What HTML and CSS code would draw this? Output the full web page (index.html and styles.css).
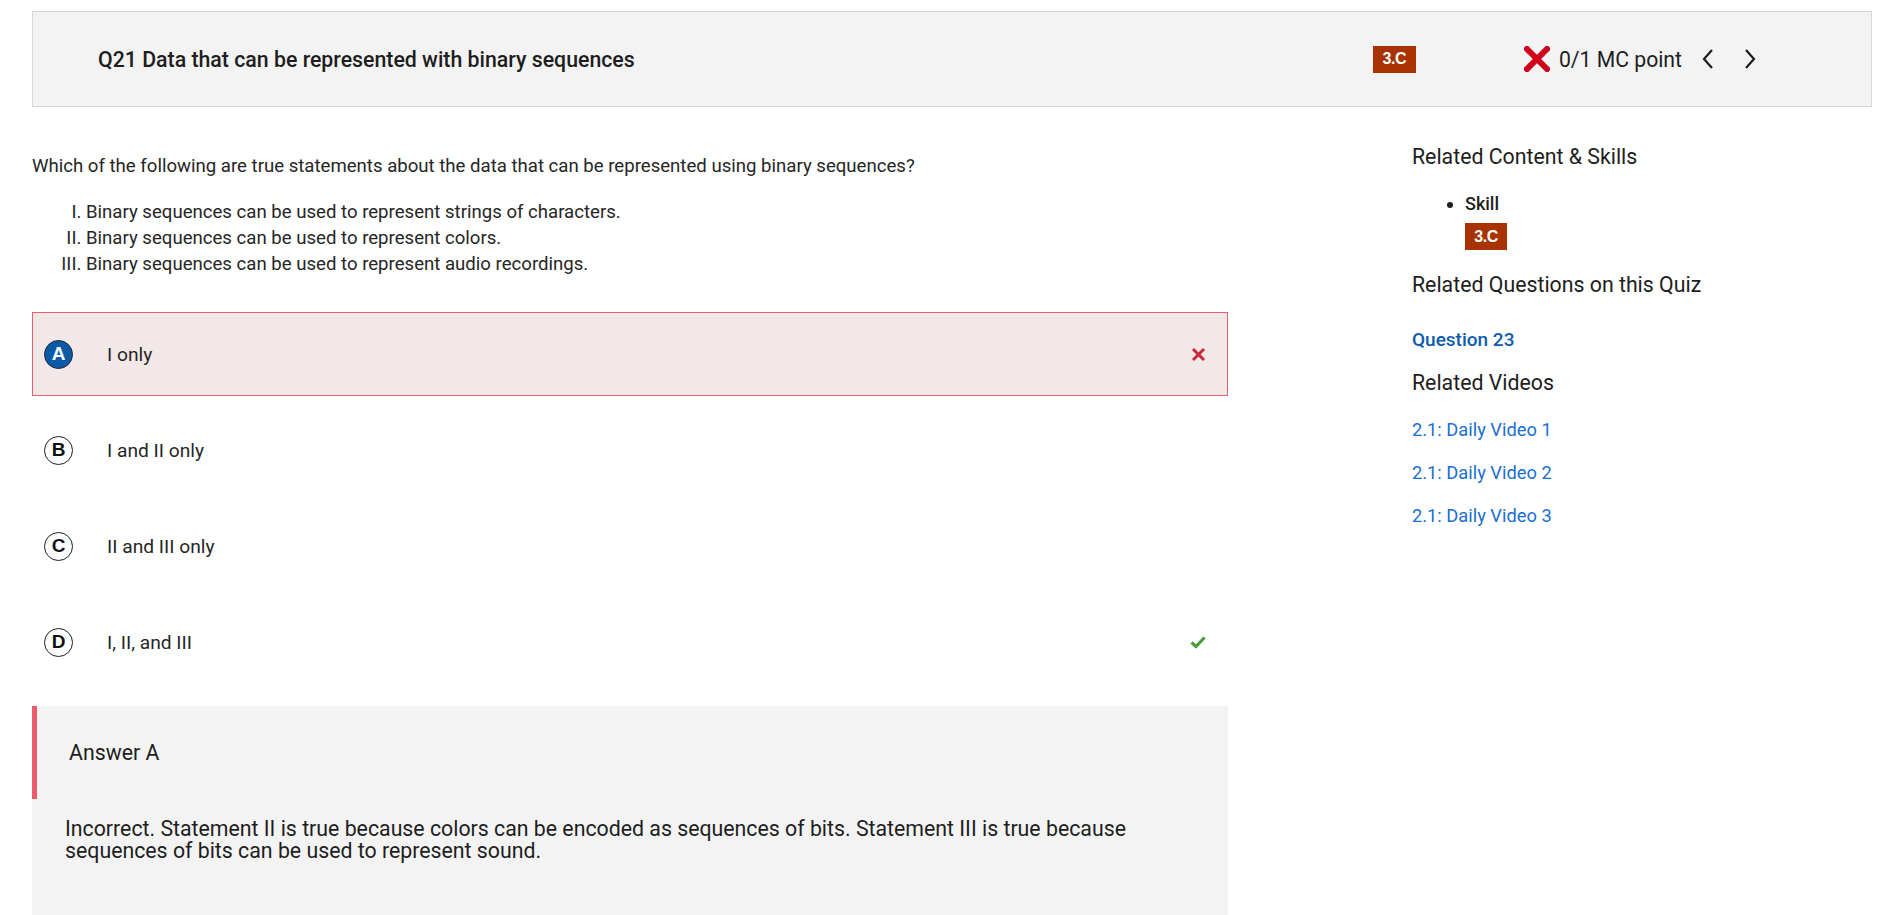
FILE: index.html
```html
<!DOCTYPE html>
<html lang="en">
<head>
<meta charset="utf-8">
<title>Q21 Data that can be represented with binary sequences</title>
<link rel="stylesheet" href="styles.css">
</head>
<body>
<div class="page">
  <header class="qhead">
    <h1 class="qtitle">Q21 Data that can be represented with binary sequences</h1>
    <span class="badge">3.C</span>
    <div class="score">
      <svg class="score-x" viewBox="0 0 26 26" width="26" height="26"><path d="M3 3 L23 23 M23 3 L3 23" stroke="#d0021b" stroke-width="6" stroke-linecap="square"/></svg>
      <span class="score-text">0/1 MC point</span>
      <button class="nav" aria-label="Previous"><svg viewBox="0 0 14 22" width="14" height="22"><path d="M11 2 L3 11 L11 20" fill="none" stroke="#1e1e1e" stroke-width="2.2"/></svg></button>
      <button class="nav" aria-label="Next"><svg viewBox="0 0 14 22" width="14" height="22"><path d="M3 2 L11 11 L3 20" fill="none" stroke="#1e1e1e" stroke-width="2.2"/></svg></button>
    </div>
  </header>

  <div class="layout">
    <main class="main">
      <p class="question">Which of the following are true statements about the data that can be represented using binary sequences?</p>
      <ol class="statements">
        <li>Binary sequences can be used to represent strings of characters.</li>
        <li>Binary sequences can be used to represent colors.</li>
        <li>Binary sequences can be used to represent audio recordings.</li>
      </ol>

      <div class="options">
        <div class="option option--wrong">
          <span class="letter letter--selected">A</span>
          <span class="opt-text">I only</span>
          <svg class="mark" viewBox="0 0 15 15" width="15" height="15"><path d="M2 2 L13 13 M13 2 L2 13" stroke="#c9283c" stroke-width="3"/></svg>
        </div>
        <div class="option">
          <span class="letter">B</span>
          <span class="opt-text">I and II only</span>
        </div>
        <div class="option">
          <span class="letter">C</span>
          <span class="opt-text">II and III only</span>
        </div>
        <div class="option">
          <span class="letter">D</span>
          <span class="opt-text">I, II, and III</span>
          <svg class="mark" viewBox="0 0 16 14" width="16" height="14"><path d="M1.5 7.5 L6 11.5 L14.5 2.5" fill="none" stroke="#4a9e3a" stroke-width="3.2"/></svg>
        </div>
      </div>

      <section class="answer">
        <div class="answer-head">Answer A</div>
        <p class="answer-body">Incorrect. Statement II is true because colors can be encoded as sequences of bits. Statement III is true because sequences of bits can be used to represent sound.</p>
      </section>
    </main>

    <aside class="side">
      <h2 class="side-h">Related Content &amp; Skills</h2>
      <ul class="skills">
        <li>
          <span class="skill-name">Skill</span>
          <span class="badge badge--side">3.C</span>
        </li>
      </ul>
      <h2 class="side-h side-h--q">Related Questions on this Quiz</h2>
      <a class="q-link" href="#">Question 23</a>
      <h2 class="side-h side-h--v">Related Videos</h2>
      <ul class="videos">
        <li><a href="#">2.1: Daily Video 1</a></li>
        <li><a href="#">2.1: Daily Video 2</a></li>
        <li><a href="#">2.1: Daily Video 3</a></li>
      </ul>
    </aside>
  </div>
</div>
</body>
</html>
```

FILE: styles.css
```css
* { box-sizing: border-box; }

html, body {
  margin: 0;
  padding: 0;
  background: #fff;
}

body {
  font-family: Roboto, "Liberation Sans", Arial, sans-serif;
  color: #1e1e1e;
  overflow: hidden;
}

.page {
  padding: 11px 8px 0 32px;
}

/* Header */
.qhead {
  display: flex;
  align-items: center;
  height: 96px;
  background: #f3f3f3;
  border: 1px solid #d6d6d6;
  padding: 0 114px 0 65px;
}

.qtitle {
  flex: 1;
  margin: 0;
  font-size: 21.3px;
  font-weight: 500;
  color: #1e1e1e;
}

.badge {
  display: inline-flex;
  align-items: center;
  justify-content: center;
  width: 43px;
  height: 27px;
  background: #a83200;
  color: #fff;
  font-family: "Liberation Sans", Arial, sans-serif;
  font-weight: 700;
  font-size: 16px;
  letter-spacing: -0.4px;
}

.score {
  display: flex;
  align-items: center;
  margin-left: 108px;
}

.score-x {
  display: block;
  margin-right: 9px;
}

.score-text {
  font-size: 21.2px;
  color: #1e1e1e;
}

.nav {
  border: 0;
  background: none;
  padding: 0;
  margin-left: 19px;
  width: 14px;
  height: 22px;
  display: flex;
}

.nav + .nav {
  margin-left: 28px;
}

/* Layout */
.layout {
  display: grid;
  grid-template-columns: 65% 25%;
  column-gap: 10%;
  margin-top: 36px;
}

.question {
  margin: 11px 0 0;
  font-size: 18.6px;
  line-height: 24px;
  color: #262626;
}

.statements {
  list-style: upper-roman;
  margin: 21px 0 0;
  padding-left: 54px;
  font-size: 18.6px;
  line-height: 26px;
  color: #262626;
}

.options {
  display: flex;
  flex-direction: column;
  gap: 12px;
  margin-top: 35px;
}

.option {
  display: flex;
  align-items: center;
  height: 84px;
  padding: 0 21px 0 11px;
  border: 1px solid transparent;
}

.option--wrong {
  background: #f3e8e8;
  border-color: #e8606e;
}

.letter {
  display: inline-flex;
  align-items: center;
  justify-content: center;
  width: 29px;
  height: 29px;
  border-radius: 50%;
  border: 1.5px solid #1e1e1e;
  background: #fff;
  font-family: "Liberation Sans", Arial, sans-serif;
  font-weight: 700;
  font-size: 19px;
  color: #111;
}

.letter--selected {
  background: #0b5aa8;
  color: #fff;
  border-color: #1e2a3a;
}

.opt-text {
  flex: 1;
  margin-left: 34px;
  font-size: 19.2px;
  color: #262626;
}

.mark {
  display: block;
}

.answer {
  margin-top: 22px;
  background: #f3f3f3;
  padding-bottom: 60px;
}

.answer-head {
  height: 93px;
  display: flex;
  align-items: center;
  border-left: 5px solid #ec5a6c;
  padding-left: 32px;
  font-size: 21.3px;
  color: #1e1e1e;
}

.answer-body {
  margin: 19px 0 0;
  padding: 0 40px 0 33px;
  font-size: 21.3px;
  line-height: 21.6px;
  color: #1e1e1e;
}

/* Sidebar */
.side-h {
  margin: 0;
  font-size: 21.3px;
  font-weight: 400;
  line-height: 28px;
  color: #1e1e1e;
}

.skills {
  margin: 21px 0 0;
  padding-left: 53px;
  font-size: 18px;
}

.skills li {
  line-height: 24px;
}

.skill-name {
  display: block;
  font-weight: 500;
}

.badge--side {
  margin-top: 7px;
  width: 42px;
}

.side-h--q {
  margin-top: 21px;
}

.q-link {
  display: block;
  margin-top: 29px;
  font-size: 19px;
  font-weight: 500;
  line-height: 24px;
  color: #0d5bad;
  text-decoration: none;
}

.side-h--v {
  margin-top: 17px;
}

.videos {
  list-style: none;
  margin: 21px 0 0;
  padding: 0;
  display: flex;
  flex-direction: column;
  gap: 19px;
}

.videos li {
  font-size: 18.3px;
  line-height: 24px;
}

.videos a {
  color: #1a6fd1;
  text-decoration: none;
}
```
